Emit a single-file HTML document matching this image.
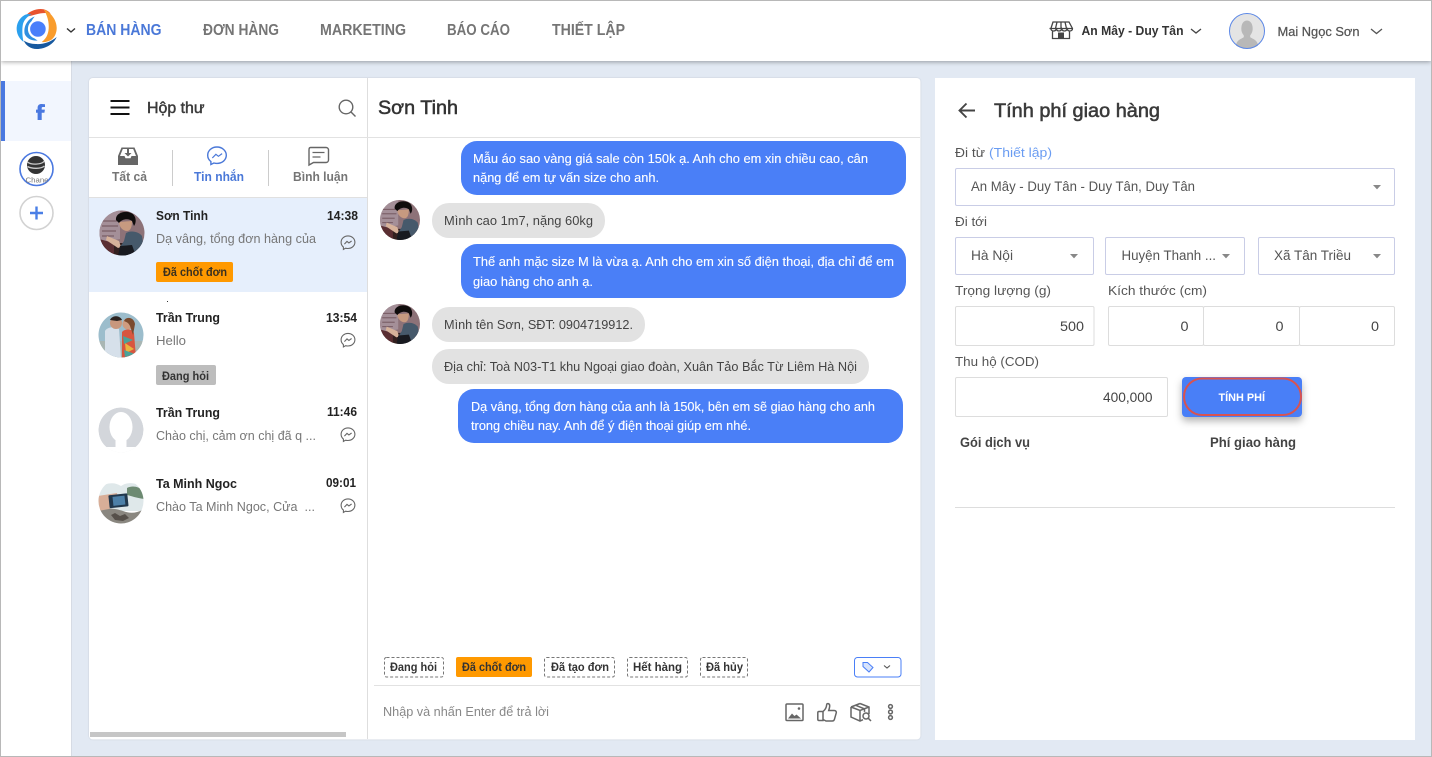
<!DOCTYPE html>
<html lang="vi"><head><meta charset="utf-8"><title>Tính phí giao hàng</title>
<style>
html,body{margin:0;padding:0;background:#e2e9f3;width:1432px;height:757px;overflow:hidden}
svg{display:block}
text{font-family:"Liberation Sans","Noto Sans CJK SC",sans-serif;white-space:pre}
.b{font-weight:700}
</style></head><body>
<svg xmlns="http://www.w3.org/2000/svg" width="1432" height="757" viewBox="0 0 1432 757">
<defs>
<filter id="sh" x="-5%" y="-20%" width="110%" height="160%"><feDropShadow dx="0" dy="1" stdDeviation="2.5" flood-color="#000" flood-opacity=".35"/></filter>
<filter id="bs" x="-20%" y="-30%" width="140%" height="190%"><feDropShadow dx="0" dy="4" stdDeviation="4" flood-color="#000" flood-opacity=".3"/></filter>
<filter id="ps" x="-2%" y="-2%" width="104%" height="104%"><feDropShadow dx="0" dy="0" stdDeviation=".7" flood-color="#000" flood-opacity=".18"/></filter>
<clipPath id="c0"><circle cx="0" cy="0" r="22.5"/></clipPath>
<g id="msg" fill="none" stroke="#666" stroke-width="1.1"><path d="M0-6.6C-3.9-6.6-6.9-3.8-6.9-.2-6.9 1.8-6 3.5-4.6 4.6V6.9L-2.4 5.7C-1.7 5.9-.9 6-.1 6 3.8 6 6.9 3.3 6.9-.2 6.9-3.8 3.9-6.6 0-6.6Z"/><path d="M-3.6 1.6-1 -1.1.9.4 3.6-1.5"/></g>
<g id="sontinh"><g clip-path="url(#c0)"><rect x="-23" y="-23" width="46" height="46" fill="#8d7278"/><path d="M-23-23H-2V6L-23 10Z" fill="#a48f98"/><path d="M-20-12H-4M-20-7H-4M-20-2H-6M-20 3H-8" stroke="#6e5058" stroke-width="1"/><rect x="-23" y="10" width="46" height="13" fill="#33201f"/><path d="M-23 6-8 10V23H-23Z" fill="#5a2e32"/><path d="M-3-11C-3-6 1-2 5-2 9-2 10-7 10-12Z" fill="#c79a80"/><path d="M-6-13C-7-20 3-23 9-20 14-18 15-11 12-7L10-12C6-15 0-14-3-10Z" fill="#0f0c0c"/><path d="M4 0C10-3 17-1 20 3L23 23H2L-2 14 2 8Z" fill="#46596b"/><path d="M-15 3-3 8-1 14-4 15-16 7Z" fill="#d7b29a"/><path d="M-2 13 10 12 14 23H-4Z" fill="#181a20"/></g></g>
<g id="couple"><g clip-path="url(#c0)"><rect x="-23" y="-23" width="46" height="46" fill="#9cbdcc"/><rect x="-23" y="6" width="46" height="17" fill="#a9b6b3"/><path d="M-16 23V-4C-14-8-6-9-2-6L0 23Z" fill="#d6e0ea"/><circle cx="-5" cy="-12" r="6" fill="#c8977d"/><path d="M-11-15C-9-20-1-20 1-15L-4-14Z" fill="#2c2320"/><path d="M1 23V-3C4-7 12-6 13-2L15 23Z" fill="#d8563f"/><path d="M4 8 13 14 5 18Z" fill="#e9b53f"/><path d="M2 1 12 5 3 9ZM3 15 14 19 4 22Z" fill="#4aa39a"/><circle cx="7" cy="-11" r="5.500" fill="#cf9c80"/><path d="M3-14C5-19 13-18 14-11L12 0 9-9C7-13 5-13 3-14Z" fill="#7a4a2e"/></g></g>
<g id="land"><g clip-path="url(#c0)"><rect x="-23" y="-23" width="46" height="46" fill="#fff"/><path d="M-23-13C-14-19-6-19 0-15 8-20 16-18 23-13V10H-23Z" fill="#dfe8ea"/><path d="M6-13C12-16 18-14 23-10V-2C16-3 10-5 6-6Z" fill="#6d8a72"/><path d="M-23 9C-12 6-4 8 2 10 10 13 16 12 23 8V23H-23Z" fill="#8a8780"/><path d="M-10 14-6 12-1 15 4 13 8 17 2 20-6 19Z" fill="#56504a"/><path d="M-23-5-4-8-3 0-12 8-23 10Z" fill="#d8ae98"/><rect x="-12" y="-7" width="19" height="13" rx="1" transform="rotate(-6)" fill="#22384d"/><rect x="-8" y="-5" width="12" height="9" transform="rotate(-6)" fill="#4d80a8"/></g></g>
<g id="car"><path d="M0 0h8l-4 4.4z" fill="#888"/></g>
</defs>

<rect width="1432" height="757" fill="#e2e9f3"/>

<!-- sidebar -->
<rect x="1" y="61" width="70" height="695" fill="#fff"/>
<rect x="71" y="61" width="1" height="695" fill="#d6dbe4"/>
<rect x="1" y="81" width="70" height="60" fill="#f2f6fe"/>
<rect x="1" y="81" width="4" height="60" fill="#4a78e0"/>
<path d="M37.600 120V112.800H36V109.600H37.600V107.800C37.600 105.200 39.200 104 41.600 104L45 104.200V107H42.900C42 107 41.700 107.400 41.700 108.300V109.600H44.900L44.400 112.800H41.700V120Z" fill="#4a78e0"/>
<circle cx="36.500" cy="169" r="16.500" fill="#fff" stroke="#4a78e0" stroke-width="1.600"/>
<circle cx="36" cy="165" r="9" fill="#333"/>
<path d="M27.500 162C31 165 41 165 44.500 161M27.500 166.500C32 169 41 169 44.500 166" stroke="#ccc" stroke-width="1.300" fill="none"/>
<text x="25.500" y="182.500" font-size="7.500" fill="#777" textLength="23" lengthAdjust="spacingAndGlyphs">Chane</text>
<circle cx="36.500" cy="213" r="16.500" fill="#fff" stroke="#d2d2d2" stroke-width="1.600"/>
<path d="M36.500 206.500v13M30 213h13" stroke="#4a7fe6" stroke-width="2.400"/>

<!-- header -->
<rect x="1" y="1" width="1430" height="60" fill="#fff" filter="url(#sh)"/>
<g transform="translate(36.700 29)">
<path d="M-12-12C-8-17.500-2-20 4-20 8-20 11-18.500 14-15.500 9-16.500 4-16-1-14.500-5-13.500-9-12.500-12-12Z" fill="#e8532f"/>
<path d="M7-19.500C14-17 20-9 20-1 20 4 18 8 15 10.500 12 12.500 8 13.500 5 13 9 10 11.500 6 12-.5 12.500-7 10.500-14 7-19.500Z" fill="#f99c2c"/>
<path d="M20 8C17 15 9 20 0 20-6 20-11 16.500-13 11.500-10 13.500-6 15-1 15 7 15.500 14 13 20 8Z" fill="#17599f"/>
<path d="M-12-14C-17.500-11-20.500-5-20 1-19.500 6-17 10-13 13-14.500 8-15-3-13-7-11.500-10-9-13-5-14.500-8-15-10-15-12-14Z" fill="#2ba0ee"/>
<path d="M-12 5C-13.500-3-9-10-2-12.500-6-8-7.500-3-6 3-5 7-2 10 1 11.500-5 12-10 9.500-12 5Z" fill="#2f8fe0"/>
<circle cx="1.200" cy="0" r="10" fill="#fff"/>
<circle cx="1.200" cy="0" r="7.800" fill="#4a7ffa"/>
</g>
<path d="M67 28.500l4 3.500 4-3.500" fill="none" stroke="#333" stroke-width="1.400"/>
<g font-size="15.500" class="b" fill="#757575">
<text x="86" y="35" fill="#4a78d8" textLength="75.500" lengthAdjust="spacingAndGlyphs">BÁN HÀNG</text>
<text x="203" y="35" textLength="76" lengthAdjust="spacingAndGlyphs">ĐƠN HÀNG</text>
<text x="320" y="35" textLength="86" lengthAdjust="spacingAndGlyphs">MARKETING</text>
<text x="447" y="35" textLength="63" lengthAdjust="spacingAndGlyphs">BÁO CÁO</text>
<text x="552" y="35" textLength="73" lengthAdjust="spacingAndGlyphs">THIẾT LẬP</text>
</g>
<g fill="none" stroke="#444" stroke-width="1.300">
<path d="M1053 22h16l3.500 6.500c0 1.500-1.100 2.500-2.700 2.500-1.500 0-2.300-.9-2.700-2-.4 1.100-1.300 2-2.700 2s-2.300-.9-2.700-2c-.4 1.100-1.300 2-2.700 2s-2.300-.9-2.700-2c-.4 1.100-1.300 2-2.700 2-1.600 0-2.700-1-2.700-2.500zM1049.500 28.500h23M1057 22l-1.500 6.500M1065 22l1.500 6.500M1061 22v6.500M1052.500 31v7.500h17V31"/>
</g>
<rect x="1058" y="32.500" width="6" height="6" fill="#444"/>
<text x="1081.500" y="35" font-size="12.500" class="b" fill="#333" textLength="102" lengthAdjust="spacingAndGlyphs">An Mây - Duy Tân</text>
<path d="M1191 29l5 4 5-4" fill="none" stroke="#444" stroke-width="1.300"/>
<circle cx="1247" cy="31" r="17.500" fill="#e4e4e4"/>
<path d="M1236 45.500C1236.500 40 1241 39 1243.500 37.500 1244 36.500 1244 35.500 1243.500 35 1241.500 32.500 1241 29.500 1241.500 26.500 1242 22.500 1244.500 20.500 1247 20.500S1252 22.500 1252.500 26.500C1253 29.500 1252.500 32.500 1250.500 35 1250 35.500 1250 36.500 1250.500 37.500 1253 39 1257.500 40 1258 45.500 1255 47.500 1251 48.500 1247 48.500S1239 47.500 1236 45.500Z" fill="#b8b8b8"/>
<circle cx="1247" cy="31" r="17.500" fill="none" stroke="#5b87e6" stroke-width="1"/>
<text x="1277.500" y="36" font-size="13" fill="#555" stroke="#555" stroke-width=".25" textLength="82" lengthAdjust="spacingAndGlyphs">Mai Ngọc Sơn</text>
<path d="M1371 29l5.500 4.500 5.500-4.500" fill="none" stroke="#555" stroke-width="1.300"/>

<!-- panels -->
<rect x="89" y="78" width="831.500" height="661.500" rx="4" fill="#fff" filter="url(#ps)"/>
<rect x="935" y="78" width="480" height="662" fill="#fff"/>
<rect x="367" y="78" width="1" height="661" fill="#dedede"/>
<rect x="89" y="137" width="831" height="1" fill="#e2e2e2"/>

<!-- inbox header -->
<path d="M110.500 101h19M110.500 107.500h19M110.500 114h19" stroke="#111" stroke-width="2"/>
<text x="147" y="113" font-size="15.500" fill="#3a3a3a" stroke="#3a3a3a" stroke-width=".45" textLength="57.500" lengthAdjust="spacingAndGlyphs">Hộp thư</text>
<circle cx="346" cy="107" r="6.800" fill="none" stroke="#666" stroke-width="1.400"/>
<path d="M351 112l4.500 4.500" stroke="#666" stroke-width="1.400"/>

<!-- tabs -->
<path d="M121.500 147.500H134.500L138 156V165H118V156Z" fill="#666"/>
<path d="M122.800 149H133.200L136 156H131.500L130.500 158.300H125.500L124.500 156H120Z" fill="#fff"/>
<path d="M127 149v4h-2.500l3.500 3.500 3.500-3.500H129v-4z" fill="#666"/>
<text x="112" y="181" font-size="12.500" class="b" fill="#757575" textLength="35" lengthAdjust="spacingAndGlyphs">Tất cả</text>
<rect x="172" y="150" width="1" height="36" fill="#ccc"/>
<g fill="none" stroke="#4a78d8" stroke-width="1.400"><path d="M217 147c-5.300 0-9.300 3.600-9.300 8.300 0 2.600 1.200 4.800 3.200 6.300v2.900l3-1.500c1 .3 2 .4 3.100.4 5.300 0 9.300-3.600 9.300-8.100s-4-8.300-9.300-8.300Z"/><path d="M212.300 158l3.600-3.700 2.500 2 3.700-2.700" stroke-width="1.200"/></g>
<text x="194" y="181" font-size="12.500" class="b" fill="#4a78d8" textLength="50" lengthAdjust="spacingAndGlyphs">Tin nhắn</text>
<rect x="268" y="150" width="1" height="36" fill="#ccc"/>
<path d="M310.500 147.500h15.500c1.400 0 2.500 1.100 2.500 2.500v10c0 1.400-1.100 2.500-2.500 2.500h-12.500l-4.500 2.500v-15c0-1.400 .4-2.500 1.500-2.500Z" fill="none" stroke="#666" stroke-width="1.400"/>
<path d="M312.500 152.500h12M312.500 157h8" stroke="#666" stroke-width="1.300"/>
<text x="293" y="181" font-size="12.500" class="b" fill="#757575" textLength="55" lengthAdjust="spacingAndGlyphs">Bình luận</text>
<rect x="89" y="197" width="278" height="1" fill="#e0e0e0"/>

<!-- list -->
<rect x="89" y="198" width="278" height="94" fill="#e6effc"/>
<use href="#sontinh" x="122" y="233"/>
<g font-size="12.500" class="b" fill="#222">
<text x="156" y="220" textLength="52" lengthAdjust="spacingAndGlyphs">Sơn Tinh</text>
<text x="327" y="220" textLength="31" lengthAdjust="spacingAndGlyphs">14:38</text>
<text x="156" y="322" textLength="64" lengthAdjust="spacingAndGlyphs">Trần Trung</text>
<text x="326" y="322" textLength="31" lengthAdjust="spacingAndGlyphs">13:54</text>
<text x="156" y="417" textLength="64" lengthAdjust="spacingAndGlyphs">Trần Trung</text>
<text x="327" y="416" textLength="30" lengthAdjust="spacingAndGlyphs">11:46</text>
<text x="156" y="488" textLength="81" lengthAdjust="spacingAndGlyphs">Ta Minh Ngoc</text>
<text x="326" y="487" textLength="30" lengthAdjust="spacingAndGlyphs">09:01</text>
</g>
<g font-size="13" fill="#777">
<text x="156" y="243" textLength="160" lengthAdjust="spacingAndGlyphs">Dạ vâng, tổng đơn hàng của</text>
<text x="156" y="345" textLength="30" lengthAdjust="spacingAndGlyphs">Hello</text>
<text x="156" y="440" textLength="160" lengthAdjust="spacingAndGlyphs">Chào chị, cảm ơn chị đã q ...</text>
<text x="156" y="511" textLength="159" lengthAdjust="spacingAndGlyphs">Chào Ta Minh Ngoc, Cửa  ...</text>
</g>
<use href="#msg" x="348" y="242.500"/>
<rect x="156" y="262" width="77" height="20" rx="2" fill="#ff9900"/>
<text x="163" y="276" font-size="12" class="b" fill="#3a3020" textLength="64" lengthAdjust="spacingAndGlyphs">Đã chốt đơn</text>

<rect x="167" y="301" width="1" height="1" fill="#333"/>
<use href="#couple" x="121" y="335"/>
<use href="#msg" x="348" y="340"/>
<rect x="156" y="365" width="60" height="20" rx="2" fill="#bdbdbd"/>
<text x="162" y="380" font-size="12" class="b" fill="#333" textLength="47" lengthAdjust="spacingAndGlyphs">Đang hỏi</text>

<g transform="translate(121 430)"><g clip-path="url(#c0)"><circle r="22.500" fill="#d3d6db"/><ellipse cx="0" cy="-3" rx="11.500" ry="15" fill="#fff"/><rect x="-5.500" y="5" width="11" height="13" fill="#fff"/><rect x="-23" y="17" width="46" height="7" fill="#fff"/></g></g>
<use href="#msg" x="348" y="434.500"/>

<use href="#land" x="121" y="501"/>
<use href="#msg" x="348" y="505.500"/>
<rect x="90" y="732" width="256" height="5" fill="#c6c6c6"/>

<!-- chat -->
<text x="378" y="114" font-size="19.500" fill="#333" stroke="#333" stroke-width=".5" textLength="80" lengthAdjust="spacingAndGlyphs">Sơn Tinh</text>

<rect x="461" y="141" width="445" height="54" rx="16" fill="#4a7ff7"/>
<g font-size="13" fill="#fff" stroke="#fff" stroke-width=".12">
<text x="473" y="163" textLength="395" lengthAdjust="spacingAndGlyphs">Mẫu áo sao vàng giá sale còn 150k ạ. Anh cho em xin chiều cao, cân</text>
<text x="473" y="182" textLength="186" lengthAdjust="spacingAndGlyphs">nặng để em tự vấn size cho anh.</text>
</g>
<g transform="translate(400 220) scale(.889)"><use href="#sontinh"/></g>
<rect x="432" y="203" width="173" height="35" rx="17" fill="#e2e2e2"/>
<text x="444" y="225" font-size="13" fill="#444" textLength="149" lengthAdjust="spacingAndGlyphs">Mình cao 1m7, nặng 60kg</text>

<rect x="461" y="244" width="445" height="54" rx="16" fill="#4a7ff7"/>
<g font-size="13" fill="#fff" stroke="#fff" stroke-width=".12">
<text x="473" y="266" textLength="421" lengthAdjust="spacingAndGlyphs">Thế anh mặc size M là vừa ạ. Anh cho em xin số điện thoại, địa chỉ để em</text>
<text x="473" y="286" textLength="120" lengthAdjust="spacingAndGlyphs">giao hàng cho anh ạ.</text>
</g>
<g transform="translate(400 324) scale(.889)"><use href="#sontinh"/></g>
<rect x="432" y="307" width="213" height="35" rx="17" fill="#e2e2e2"/>
<text x="444" y="329" font-size="13" fill="#444" textLength="189" lengthAdjust="spacingAndGlyphs">Mình tên Sơn, SĐT: 0904719912.</text>
<rect x="432" y="349" width="437" height="35" rx="17" fill="#e2e2e2"/>
<text x="444" y="371" font-size="13" fill="#444" textLength="413" lengthAdjust="spacingAndGlyphs">Địa chỉ: Toà N03-T1 khu Ngoại giao đoàn, Xuân Tảo Bắc Từ Liêm Hà Nội</text>
<rect x="458" y="389" width="445" height="54" rx="16" fill="#4a7ff7"/>
<g font-size="13" fill="#fff" stroke="#fff" stroke-width=".12">
<text x="471" y="411" textLength="404" lengthAdjust="spacingAndGlyphs">Dạ vâng, tổng đơn hàng của anh là 150k, bên em sẽ giao hàng cho anh</text>
<text x="471" y="430" textLength="280" lengthAdjust="spacingAndGlyphs">trong chiều nay. Anh để ý điện thoại giúp em nhé.</text>
</g>

<!-- tags -->
<g fill="#fff" stroke="#777" stroke-width="1" stroke-dasharray="3 2">
<rect x="384.500" y="657.500" width="59" height="19.500" rx="2"/>
<rect x="544.500" y="657.500" width="70" height="19.500" rx="2"/>
<rect x="627.500" y="657.500" width="60" height="19.500" rx="2"/>
<rect x="700.500" y="657.500" width="47" height="19.500" rx="2"/>
</g>
<rect x="456" y="657" width="76" height="20" rx="2" fill="#ff9900"/>
<g font-size="12" class="b" fill="#333">
<text x="390" y="671" textLength="47" lengthAdjust="spacingAndGlyphs">Đang hỏi</text>
<text x="462" y="671" textLength="64" lengthAdjust="spacingAndGlyphs">Đã chốt đơn</text>
<text x="551" y="671" textLength="58" lengthAdjust="spacingAndGlyphs">Đã tạo đơn</text>
<text x="633" y="671" textLength="49" lengthAdjust="spacingAndGlyphs">Hết hàng</text>
<text x="706" y="671" textLength="37" lengthAdjust="spacingAndGlyphs">Đã hủy</text>
</g>
<rect x="854.500" y="657.500" width="46.500" height="19.500" rx="3" fill="#fff" stroke="#4a7ff7" stroke-width="1"/>
<path d="M863 662.500h4.500l5.500 5-4 4.500-6-5.500Z" fill="#d7e3fb" stroke="#4a7ff7" stroke-width="1"/>
<path d="M884 665.500l3 2.500 3-2.500" fill="none" stroke="#555" stroke-width="1.100"/>
<rect x="374" y="685" width="546" height="1" fill="#e2e2e2"/>
<text x="383" y="716" font-size="13" fill="#888" textLength="166" lengthAdjust="spacingAndGlyphs">Nhập và nhấn Enter để trả lời</text>

<!-- composer icons -->
<g fill="none" stroke="#666" stroke-width="1.500">
<rect x="786" y="704" width="17" height="16.500" rx="1"/>
<path d="M819 711.500h4v9h-4c-.8 0-1.200-.4-1.200-1.200v-6.600c0-.8.400-1.200 1.200-1.200ZM823 711.500c2-1.500 3.500-4.500 3.700-7 .1-1.500 3-1.200 3 1.200 0 1.600-.5 3.200-1 4.800h5.500c1.500 0 2.500 1.200 2 2.600l-1.800 6.300c-.3 1-1.200 1.600-2.200 1.600h-6.200L823 719.500"/>
<path d="M860 703.500l9 3.500v7M851 707l9-3.500M851 707v10l9 4 3-1.300M851 707l9 3.500 9-3.500M860 710.500v10.500M855.500 705.200l9 3.700v3"/>
<circle cx="866" cy="716" r="3"/><path d="M868.200 718.200l2.800 2.800"/>
<circle cx="890.500" cy="706.500" r="1.900"/><circle cx="890.500" cy="712" r="1.900"/><circle cx="890.500" cy="717.500" r="1.900"/>
</g>
<path d="M788 718.500l4-5 2.500 2.500 2-1.500 4.500 4Z" fill="#666"/><circle cx="799" cy="708.500" r="1.300" fill="#666"/>

<!-- right panel -->
<path d="M975 110.500h-15M966.500 103.500l-7 7 7 7" fill="none" stroke="#444" stroke-width="1.900"/>
<text x="994" y="117" font-size="19.500" fill="#3a3a3a" stroke="#3a3a3a" stroke-width=".55" textLength="166" lengthAdjust="spacingAndGlyphs">Tính phí giao hàng</text>

<g font-size="13" fill="#555">
<text x="955" y="157" textLength="30" lengthAdjust="spacingAndGlyphs">Đi từ</text>
<text x="989" y="157" fill="#6a9cf2" textLength="63" lengthAdjust="spacingAndGlyphs">(Thiết lập)</text>
<text x="955" y="226" textLength="32" lengthAdjust="spacingAndGlyphs">Đi tới</text>
<text x="955" y="295" textLength="96" lengthAdjust="spacingAndGlyphs">Trọng lượng (g)</text>
<text x="1108" y="295" textLength="99" lengthAdjust="spacingAndGlyphs">Kích thước (cm)</text>
<text x="955" y="366" textLength="84" lengthAdjust="spacingAndGlyphs">Thu hộ (COD)</text>
</g>

<g fill="#fff" stroke="#c9cde6" stroke-width="1">
<rect x="955.500" y="168.500" width="439" height="37" rx="1.500"/>
<rect x="955.500" y="237.500" width="138" height="37" rx="1.500"/>
<rect x="1105.500" y="237.500" width="139" height="37" rx="1.500"/>
<rect x="1258.500" y="237.500" width="136" height="37" rx="1.500"/>
</g>
<g font-size="13.500" fill="#555">
<text x="971" y="191" textLength="224" lengthAdjust="spacingAndGlyphs">An Mây - Duy Tân - Duy Tân, Duy Tân</text>
<text x="971" y="260" textLength="42" lengthAdjust="spacingAndGlyphs">Hà Nội</text>
<text x="1121.500" y="260" textLength="94.500" lengthAdjust="spacingAndGlyphs">Huyện Thanh ...</text>
<text x="1274" y="260" textLength="77" lengthAdjust="spacingAndGlyphs">Xã Tân Triều</text>
</g>
<use href="#car" x="1373" y="185"/>
<use href="#car" x="1070" y="254"/>
<use href="#car" x="1222" y="254"/>
<use href="#car" x="1373" y="254"/>

<g fill="#fff" stroke="#ddd" stroke-width="1">
<rect x="955.500" y="306.500" width="138.500" height="39" rx="1.500"/>
<rect x="1108.500" y="306.500" width="95" height="39" rx="1.500"/>
<rect x="1203.500" y="306.500" width="96" height="39" rx="1.500"/>
<rect x="1299.500" y="306.500" width="95" height="39" rx="1.500"/>
<rect x="955.500" y="377.500" width="212" height="39" rx="1.500"/>
</g>
<g font-size="13.500" fill="#444">
<text x="1060" y="331" textLength="24" lengthAdjust="spacingAndGlyphs">500</text>
<text x="1180.500" y="331" textLength="8" lengthAdjust="spacingAndGlyphs">0</text>
<text x="1275.500" y="331" textLength="8" lengthAdjust="spacingAndGlyphs">0</text>
<text x="1371" y="331" textLength="8" lengthAdjust="spacingAndGlyphs">0</text>
<text x="1103" y="402" textLength="49.500" lengthAdjust="spacingAndGlyphs">400,000</text>
</g>
<rect x="1182" y="377" width="120" height="40" rx="4" fill="#4a7ff7" filter="url(#bs)"/>
<rect x="1184" y="378.500" width="117" height="36.500" rx="18.200" fill="none" stroke="#d9534f" stroke-width="2"/>
<text x="1218.500" y="401" font-size="11" class="b" fill="#fff" textLength="46.500" lengthAdjust="spacingAndGlyphs">TÍNH PHÍ</text>
<text x="960" y="447" font-size="13.500" class="b" fill="#444" textLength="70" lengthAdjust="spacingAndGlyphs">Gói dịch vụ</text>
<text x="1210" y="447" font-size="13.500" class="b" fill="#444" textLength="86" lengthAdjust="spacingAndGlyphs">Phí giao hàng</text>
<rect x="955" y="507" width="440" height="1" fill="#ddd"/>

<!-- frame -->
<rect x=".5" y=".5" width="1431" height="756" fill="none" stroke="#b8b8b8" stroke-width="1"/>
</svg>
</body></html>
